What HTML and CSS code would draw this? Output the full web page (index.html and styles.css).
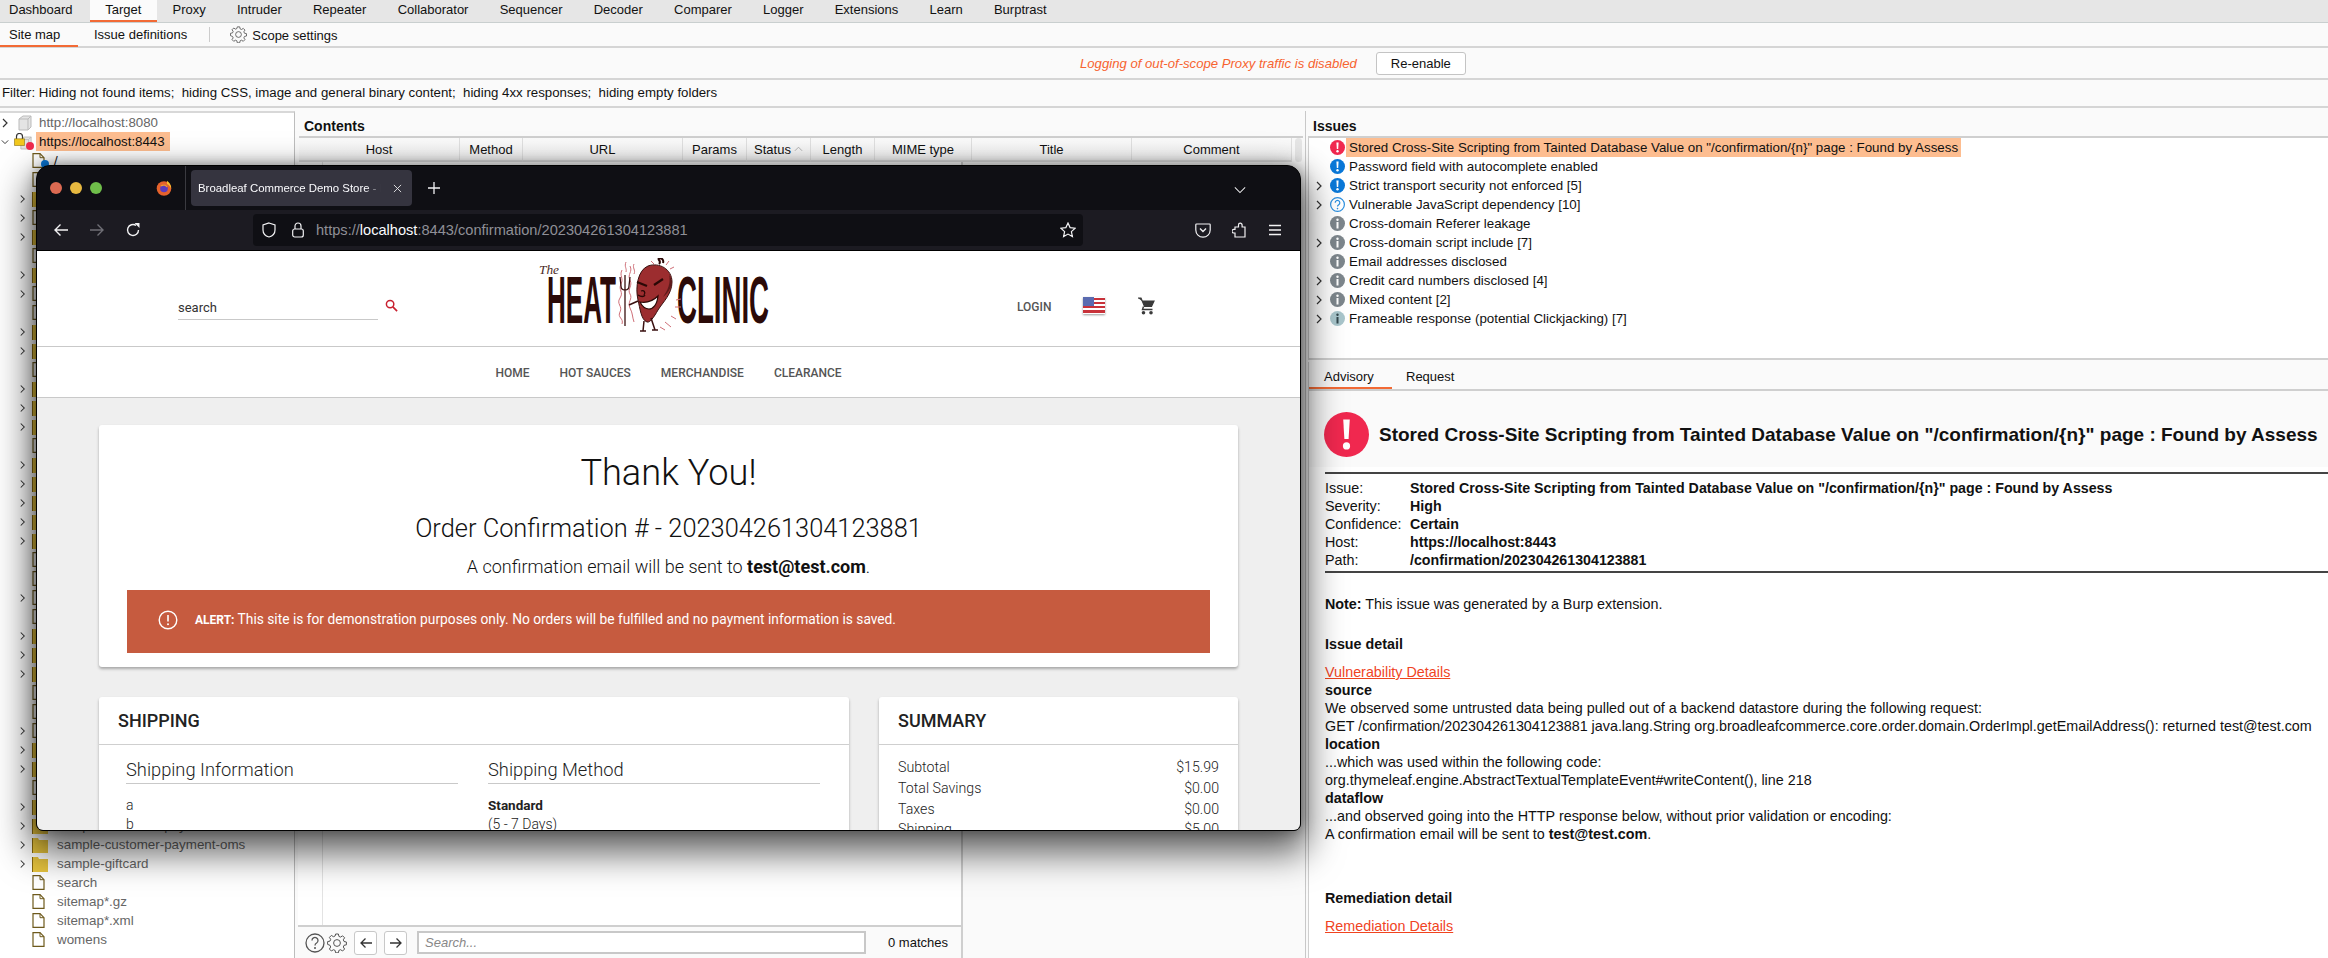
FILE: index.html
```html
<!DOCTYPE html>
<html lang="en">
<head>
<meta charset="utf-8">
<title>Burp Suite - Target</title>
<link rel="stylesheet" href="styles.css">
</head>
<body>
<svg class="defs" width="0" height="0" aria-hidden="true">
  <symbol id="chev" viewBox="0 0 8 10"><path d="M2 1l4 4-4 4" fill="none" stroke="#333" stroke-width="1.2"/></symbol>
  <symbol id="chevd" viewBox="0 0 10 8"><path d="M1 2l4 4 4-4" fill="none" stroke="#333" stroke-width="1.2"/></symbol>
  <symbol id="file" viewBox="0 0 13 15"><path d="M1 .7h7l4 4v9.6H1z" fill="#fff" stroke="#6e5a1c" stroke-width="1.2"/><path d="M8 .7v4h4" fill="none" stroke="#6e5a1c"/></symbol>
  <symbol id="folder" viewBox="0 0 16 16"><path d="M0 1h6l1 2h9v13H0z" fill="#e8c53e"/><path d="M0 1h1v15H0z" fill="#8a6b10"/></symbol>
  <symbol id="cube" viewBox="0 0 14 16"><path d="M1 4l4-3h8v11l-3 3H1z" fill="#e4e4e4" stroke="#bbb"/><path d="M1 4h9v11M10 4l3-3" fill="none" stroke="#bbb"/></symbol>
  <symbol id="gear" viewBox="0 0 20 20"><path d="M8.6 1h2.8l.5 2.4 1.7.7 2-1.3 2 2-1.3 2 .7 1.7 2.4.5v2.8l-2.4.5-.7 1.7 1.3 2-2 2-2-1.3-1.7.7-.5 2.4H8.6l-.5-2.4-1.7-.7-2 1.3-2-2 1.3-2-.7-1.7L.6 11.4V8.6L3 8.1l.7-1.7-1.3-2 2-2 2 1.3 1.7-.7z" fill="none" stroke="#555" stroke-width="1"/><circle cx="10" cy="10" r="3.4" fill="none" stroke="#555"/></symbol>
  <symbol id="isev" viewBox="0 0 15 15"><circle cx="7.5" cy="7.5" r="7.5" fill="#f0284f"/><path d="M6.4 2.5h2.2l-.4 6.5H6.800z" fill="#fff"/><circle cx="7.500" cy="11.300" r="1.200" fill="#fff"/></symbol>
  <symbol id="iblue" viewBox="0 0 15 15"><circle cx="7.5" cy="7.5" r="7.5" fill="#0a78d8"/><path d="M6.4 2.500h2.200l-.4 6.500H6.800z" fill="#fff"/><circle cx="7.500" cy="11.300" r="1.200" fill="#fff"/></symbol>
  <symbol id="iq" viewBox="0 0 15 15"><circle cx="7.500" cy="7.500" r="6.900" fill="#fff" stroke="#2a8fe0" stroke-width="1.200"/><path d="M5.200 5.700a2.300 2.300 0 1 1 3.500 2c-.8.500-1.200 1-1.200 1.900" fill="none" stroke="#2a8fe0" stroke-width="1.200"/><circle cx="7.500" cy="11.600" r=".8" fill="#2a8fe0"/></symbol>
  <symbol id="igray" viewBox="0 0 15 15"><circle cx="7.500" cy="7.500" r="7.500" fill="#7d868c"/><circle cx="7.500" cy="3.800" r="1.200" fill="#fff"/><path d="M6.500 6h2v6.500h-2z" fill="#fff"/></symbol>
  <symbol id="ipale" viewBox="0 0 15 15"><circle cx="7.500" cy="7.500" r="7.500" fill="#a9c6cc"/><circle cx="7.500" cy="3.800" r="1.200" fill="#33474d"/><path d="M6.500 6h2v6.500h-2z" fill="#33474d"/></symbol>
</svg>

<div class="burp">
  <nav class="tabs">
    <span class="tab">Dashboard</span><span class="tab on">Target</span><span class="tab">Proxy</span><span class="tab">Intruder</span><span class="tab">Repeater</span><span class="tab">Collaborator</span><span class="tab">Sequencer</span><span class="tab">Decoder</span><span class="tab">Comparer</span><span class="tab">Logger</span><span class="tab">Extensions</span><span class="tab">Learn</span><span class="tab">Burptrast</span>
  </nav>
  <nav class="subtabs">
    <span class="sub on">Site map</span><span class="sub">Issue definitions</span>
    <span class="vsep"></span>
    <svg class="scope-gear"><use href="#gear"/></svg><span class="scope">Scope settings</span>
  </nav>
  <div class="notice">
    <em class="warn">Logging of out-of-scope Proxy traffic is disabled</em>
    <button class="btn">Re-enable</button>
  </div>
  <div class="filter">Filter: Hiding not found items;&nbsp; hiding CSS, image and general binary content;&nbsp; hiding 4xx responses;&nbsp; hiding empty folders</div>

  <main class="main">
    <section class="tree">
      <div class="row l0 muted"><svg class="cv"><use href="#chev"/></svg><svg class="ic"><use href="#cube"/></svg><span>http://localhost:8080</span></div>
      <div class="row l0"><svg class="cv"><use href="#chevd"/></svg><span class="ic lockic"><svg class="ic"><use href="#cube"/></svg><svg class="padlock" viewBox="0 0 11 13"><path d="M2.500 6V3.500a3 3 0 0 1 6 0V6" fill="none" stroke="#333" stroke-width="1.200"/><path d="M.5 5.800h10v6.700H.5z" fill="#f2c81e" stroke="#8a7010" stroke-width=".6"/></svg><i class="dot red"></i></span><span class="hl">https://localhost:8443</span></div>
      <div class="row l1"><i class="cvgap"></i><span class="fic"><svg class="fi"><use href="#file"/></svg><i class="dot blue"></i></span><span>/</span></div>
      <div class="row l1"><i class="cvgap"></i><svg class="fi"><use href="#file"/></svg></div>
      <div class="row l1"><svg class="cv"><use href="#chev"/></svg><svg class="fo"><use href="#folder"/></svg></div>
      <div class="row l1"><svg class="cv"><use href="#chev"/></svg><svg class="fi"><use href="#file"/></svg></div>
      <div class="row l1"><svg class="cv"><use href="#chev"/></svg><svg class="fo"><use href="#folder"/></svg></div>
      <div class="row l1"><i class="cvgap"></i><svg class="fi"><use href="#file"/></svg></div>
      <div class="row l1"><svg class="cv"><use href="#chev"/></svg><svg class="fo"><use href="#folder"/></svg></div>
      <div class="row l1"><svg class="cv"><use href="#chev"/></svg><svg class="fi"><use href="#file"/></svg></div>
      <div class="row l1"><i class="cvgap"></i><svg class="fi"><use href="#file"/></svg></div>
      <div class="row l1"><svg class="cv"><use href="#chev"/></svg><svg class="fo"><use href="#folder"/></svg></div>
      <div class="row l1"><svg class="cv"><use href="#chev"/></svg><svg class="fo"><use href="#folder"/></svg></div>
      <div class="row l1"><i class="cvgap"></i><svg class="fi"><use href="#file"/></svg></div>
      <div class="row l1"><svg class="cv"><use href="#chev"/></svg><svg class="fo"><use href="#folder"/></svg></div>
      <div class="row l1"><svg class="cv"><use href="#chev"/></svg><svg class="fo"><use href="#folder"/></svg></div>
      <div class="row l1"><svg class="cv"><use href="#chev"/></svg><svg class="fo"><use href="#folder"/></svg></div>
      <div class="row l1"><i class="cvgap"></i><svg class="fi"><use href="#file"/></svg></div>
      <div class="row l1"><svg class="cv"><use href="#chev"/></svg><svg class="fo"><use href="#folder"/></svg></div>
      <div class="row l1"><svg class="cv"><use href="#chev"/></svg><svg class="fo"><use href="#folder"/></svg></div>
      <div class="row l1"><svg class="cv"><use href="#chev"/></svg><svg class="fo"><use href="#folder"/></svg></div>
      <div class="row l1"><svg class="cv"><use href="#chev"/></svg><svg class="fo"><use href="#folder"/></svg></div>
      <div class="row l1"><svg class="cv"><use href="#chev"/></svg><svg class="fo"><use href="#folder"/></svg></div>
      <div class="row l1"><i class="cvgap"></i><svg class="fi"><use href="#file"/></svg></div>
      <div class="row l1"><i class="cvgap"></i><svg class="fi"><use href="#file"/></svg></div>
      <div class="row l1"><svg class="cv"><use href="#chev"/></svg><svg class="fi"><use href="#file"/></svg></div>
      <div class="row l1"><i class="cvgap"></i><svg class="fi"><use href="#file"/></svg></div>
      <div class="row l1"><svg class="cv"><use href="#chev"/></svg><svg class="fo"><use href="#folder"/></svg></div>
      <div class="row l1"><svg class="cv"><use href="#chev"/></svg><svg class="fo"><use href="#folder"/></svg></div>
      <div class="row l1"><svg class="cv"><use href="#chev"/></svg><svg class="fo"><use href="#folder"/></svg></div>
      <div class="row l1"><i class="cvgap"></i><svg class="fi"><use href="#file"/></svg></div>
      <div class="row l1"><i class="cvgap"></i><svg class="fi"><use href="#file"/></svg></div>
      <div class="row l1"><svg class="cv"><use href="#chev"/></svg><svg class="fi"><use href="#file"/></svg></div>
      <div class="row l1"><svg class="cv"><use href="#chev"/></svg><svg class="fo"><use href="#folder"/></svg></div>
      <div class="row l1"><svg class="cv"><use href="#chev"/></svg><svg class="fo"><use href="#folder"/></svg></div>
      <div class="row l1"><i class="cvgap"></i><svg class="fi"><use href="#file"/></svg></div>
      <div class="row l1"><svg class="cv"><use href="#chev"/></svg><svg class="fo"><use href="#folder"/></svg></div>
      <div class="row l1 muted"><svg class="cv"><use href="#chev"/></svg><svg class="fo"><use href="#folder"/></svg><span>sample-customer-payment</span></div>
      <div class="row l1 muted"><svg class="cv"><use href="#chev"/></svg><svg class="fo"><use href="#folder"/></svg><span>sample-customer-payment-oms</span></div>
      <div class="row l1 muted"><svg class="cv"><use href="#chev"/></svg><svg class="fo"><use href="#folder"/></svg><span>sample-giftcard</span></div>
      <div class="row l1 muted"><i class="cvgap"></i><svg class="fi"><use href="#file"/></svg><span>search</span></div>
      <div class="row l1 muted"><i class="cvgap"></i><svg class="fi"><use href="#file"/></svg><span>sitemap*.gz</span></div>
      <div class="row l1 muted"><i class="cvgap"></i><svg class="fi"><use href="#file"/></svg><span>sitemap*.xml</span></div>
      <div class="row l1 muted"><i class="cvgap"></i><svg class="fi"><use href="#file"/></svg><span>womens</span></div>
    </section>

    <section class="contents">
      <h2 class="ptitle">Contents</h2>
      <div class="thead">
        <div class="cols">
          <span>Host</span><span>Method</span><span>URL</span><span>Params</span>
          <span>Status<svg class="sort" viewBox="0 0 10 6"><path d="M1 5l4-4 4 4" fill="none" stroke="#aaa"/></svg></span>
          <span>Length</span><span>MIME type</span><span>Title</span><span>Comment</span>
        </div>
        <i class="vbar"></i>
      </div>
      <div class="lower">
        <div class="reqpane">
          <div class="gutter"></div>
          <div class="searchbar">
            <svg class="help" viewBox="0 0 20 20"><circle cx="10" cy="10" r="9" fill="none" stroke="#555" stroke-width="1.300"/><path d="M7 7.500a3 3 0 1 1 4.600 2.500c-1 .6-1.600 1.200-1.600 2.500" fill="none" stroke="#555" stroke-width="1.300"/><circle cx="10" cy="15" r="1" fill="#555"/></svg>
            <svg class="sgear"><use href="#gear"/></svg>
            <span class="nbtn"><svg viewBox="0 0 14 14"><path d="M13 7H2M6.500 2.500L2 7l4.500 4.500" fill="none" stroke="#333" stroke-width="1.300"/></svg></span>
            <span class="nbtn"><svg viewBox="0 0 14 14"><path d="M1 7h11M7.500 2.500L12 7l-4.500 4.500" fill="none" stroke="#333" stroke-width="1.300"/></svg></span>
            <span class="sinput">Search...</span>
            <span class="matches">0 matches</span>
          </div>
        </div>
      </div>
    </section>

    <section class="issues">
      <h2 class="ptitle">Issues</h2>
      <div class="ilist">
        <div class="irow"><i class="cvgap"></i><svg class="ii"><use href="#isev"/></svg><span class="hl">Stored Cross-Site Scripting from Tainted Database Value on "/confirmation/{n}" page : Found by Assess</span></div>
        <div class="irow"><i class="cvgap"></i><svg class="ii"><use href="#iblue"/></svg><span>Password field with autocomplete enabled</span></div>
        <div class="irow"><svg class="cv"><use href="#chev"/></svg><svg class="ii"><use href="#iblue"/></svg><span>Strict transport security not enforced [5]</span></div>
        <div class="irow"><svg class="cv"><use href="#chev"/></svg><svg class="ii"><use href="#iq"/></svg><span>Vulnerable JavaScript dependency [10]</span></div>
        <div class="irow"><i class="cvgap"></i><svg class="ii"><use href="#igray"/></svg><span>Cross-domain Referer leakage</span></div>
        <div class="irow"><svg class="cv"><use href="#chev"/></svg><svg class="ii"><use href="#igray"/></svg><span>Cross-domain script include [7]</span></div>
        <div class="irow"><i class="cvgap"></i><svg class="ii"><use href="#igray"/></svg><span>Email addresses disclosed</span></div>
        <div class="irow"><svg class="cv"><use href="#chev"/></svg><svg class="ii"><use href="#igray"/></svg><span>Credit card numbers disclosed [4]</span></div>
        <div class="irow"><svg class="cv"><use href="#chev"/></svg><svg class="ii"><use href="#igray"/></svg><span>Mixed content [2]</span></div>
        <div class="irow"><svg class="cv"><use href="#chev"/></svg><svg class="ii"><use href="#ipale"/></svg><span>Frameable response (potential Clickjacking) [7]</span></div>
      </div>
      <div class="atabs"><span class="atab on">Advisory</span><span class="atab">Request</span></div>
      <article class="advisory">
        <header class="ahead">
          <svg class="bigsev"><use href="#isev"/></svg>
          <h1>Stored Cross-Site Scripting from Tainted Database Value on "/confirmation/{n}" page : Found by Assess</h1>
        </header>
        <dl class="meta">
          <dt>Issue:</dt><dd>Stored Cross-Site Scripting from Tainted Database Value on "/confirmation/{n}" page : Found by Assess</dd>
          <dt>Severity:</dt><dd>High</dd>
          <dt>Confidence:</dt><dd>Certain</dd>
          <dt>Host:</dt><dd>https://localhost:8443</dd>
          <dt>Path:</dt><dd>/confirmation/202304261304123881</dd>
        </dl>
        <p class="note"><b>Note:</b> This issue was generated by a Burp extension.</p>
        <h3 class="ah3">Issue detail</h3>
        <div class="detail">
          <a class="lnk">Vulnerability Details</a>
          <b>source</b>
          <span>We observed some untrusted data being pulled out of a backend datastore during the following request:</span>
          <span>GET /confirmation/202304261304123881 java.lang.String org.broadleafcommerce.core.order.domain.OrderImpl.getEmailAddress(): returned test@test.com</span>
          <b>location</b>
          <span>...which was used within the following code:</span>
          <span>org.thymeleaf.engine.AbstractTextualTemplateEvent#writeContent(), line 218</span>
          <b>dataflow</b>
          <span>...and observed going into the HTTP response below, without prior validation or encoding:</span>
          <span>A confirmation email will be sent to <b>test@test.com</b>.</span>
        </div>
        <h3 class="ah3 rem">Remediation detail</h3>
        <div class="detail"><a class="lnk">Remediation Details</a></div>
      </article>
    </section>
  </main>
</div>

<div class="ff">
  <div class="ff-title">
    <i class="light r"></i><i class="light y"></i><i class="light g"></i>
    <svg class="fxlogo" viewBox="0 0 16 16"><circle cx="8" cy="8.500" r="7.300" fill="#e5622c"/><path d="M11 .8c3 2 4.500 5 4 8-.6-2.200-1.800-3.800-4-4.800z" fill="#f9c22d"/><circle cx="8" cy="8.500" r="3.800" fill="#5b3bbd"/><path d="M5 6c2-1.500 5-1 6 1" fill="none" stroke="#f59a2b" stroke-width="1.200"/></svg>
    <i class="ff-sep"></i>
    <div class="ff-tab"><span class="ff-tabtext">Broadleaf Commerce Demo Store - Heat Clinic</span><svg class="ff-x" viewBox="0 0 10 10"><path d="M1 1l8 8M9 1L1 9" stroke="#e8e8ea" stroke-width="1"/></svg></div>
    <svg class="ff-plus" viewBox="0 0 12 12"><path d="M6 0v12M0 6h12" stroke="#f2f2f4" stroke-width="1.300"/></svg>
    <svg class="ff-chev" viewBox="0 0 14 8"><path d="M1 1l6 6 6-6" fill="none" stroke="#e8e8ea" stroke-width="1.200"/></svg>
  </div>
  <div class="ff-nav">
    <svg class="nv" viewBox="0 0 16 16"><path d="M15 8H2M7.500 2.500L2 8l5.500 5.500" fill="none" stroke="#f2f2f4" stroke-width="1.400"/></svg>
    <svg class="nv" viewBox="0 0 16 16"><path d="M1 8h13M8.500 2.500L14 8l-5.500 5.500" fill="none" stroke="#6f6f76" stroke-width="1.400"/></svg>
    <svg class="nv" viewBox="0 0 16 16"><path d="M13.500 8A5.500 5.500 0 1 1 11 3.400" fill="none" stroke="#f2f2f4" stroke-width="1.400"/><path d="M9.500 1H14.500V6z" fill="#f2f2f4"/></svg>
    <div class="urlbar">
      <svg class="ub-shield" viewBox="0 0 14 16"><path d="M7 1l6 2v5c0 3.500-2.500 6-6 7-3.500-1-6-3.500-6-7V3z" fill="none" stroke="#f2f2f4" stroke-width="1.200"/></svg>
      <svg class="ub-lock" viewBox="0 0 12 16"><path d="M3 7V4a3 3 0 0 1 6 0v3" fill="none" stroke="#f2f2f4" stroke-width="1.200"/><rect x=".7" y="7" width="10.600" height="8" rx="2" fill="none" stroke="#f2f2f4" stroke-width="1.200"/></svg>
      <span class="url">https://<b>localhost</b>:8443/confirmation/202304261304123881</span>
      <svg class="ub-star" viewBox="0 0 16 16"><path d="M8 1l2.100 4.600 5 .6-3.700 3.400 1 5L8 12.100 3.600 14.600l1-5L.9 6.200l5-.6z" fill="none" stroke="#f2f2f4" stroke-width="1.200"/></svg>
    </div>
    <svg class="tb pocket" viewBox="0 0 16 16"><path d="M1.600 2h12.800c.4 0 .8.400.8.800V8a7.200 7.200 0 0 1-14.400 0V2.800c0-.4.400-.8.800-.8z" fill="none" stroke="#f2f2f4" stroke-width="1.200"/><path d="M5 6.500L8 9.500l3-3" fill="none" stroke="#f2f2f4" stroke-width="1.400"/></svg>
    <svg class="tb ext" viewBox="0 0 16 16"><path d="M3 15V11H1.800a1.800 1.800 0 0 1 0-3.600H3V5h3.500V3a1.800 1.800 0 0 1 3.600 0v2H13v10z" fill="none" stroke="#f2f2f4" stroke-width="1.200"/></svg>
    <svg class="tb menu" viewBox="0 0 14 12"><path d="M1 1.500h12M1 6h12M1 10.500h12" stroke="#f2f2f4" stroke-width="1.300"/></svg>
  </div>
  <div class="ff-page">
    <header class="store-head">
      <div class="store-search">
        <span class="store-q">search</span>
        <svg class="store-mag" viewBox="0 0 14 14"><circle cx="5.500" cy="5.500" r="4" fill="none" stroke="#c8202f" stroke-width="1.600"/><path d="M8.500 8.500L13 13" stroke="#c8202f" stroke-width="1.800"/></svg>
      </div>
      <svg class="logo" viewBox="0 0 234 78">
        <text class="lg-the" x="1" y="16" textLength="20" lengthAdjust="spacingAndGlyphs">The</text>
        <text class="lg" x="9" y="65" textLength="69" lengthAdjust="spacingAndGlyphs">HEAT</text>
        <text class="lg" x="139" y="65" textLength="92" lengthAdjust="spacingAndGlyphs">CLINIC</text>
        <g fill="none" stroke="#cf6f78" stroke-width="1">
          <path d="M84 12c-3 6 2 8-1 14s3 8-1 14 3 8 0 14 4 6 2 12"/>
          <path d="M92 8c3 6-3 8 0 14s-3 9 0 14-3 8 0 14 2 8 4 14"/>
          <path d="M96 6c-2 4 2 6 0 10M88 4c-2 5 1 6 0 10"/>
          <path d="M113 3l3 3M122 1l0 3M131 3l-3 4M136 9l-4 2M138 42l5-1M137 49l6 0M133 58l5 3M127 64l6 5M122 69l5 3"/>
        </g>
        <path d="M87 18v50M82 19l1 9c0 3 2 4 4 4s4-1 4-4l1-9M87 17v10" fill="none" stroke="#3a1110" stroke-width="1.300"/>
        <path d="M91 47l9-4" stroke="#3a1110" stroke-width="1.600"/>
        <path d="M110 8c11-4 24 3 24 16 0 12-9 20-14 28-4 7-8 13-11 12-6-2-7-14-9-22-3-13 0-30 10-34z" fill="#9c2d2f" stroke="#3a1110"/>
        <path d="M131 16c2 9-1 16-6 23 4-3 9-9 9-16z" fill="#5e1a1a"/>
        <path d="M121 6c3-3-2-4 0-6 3 0 5 2 4 5" fill="none" stroke="#2a0806" stroke-width="2"/>
        <path d="M99 24l10 4M125 21l-9 6" stroke="#2a0806" stroke-width="2.200"/>
        <path d="M103 33c3-1 5 1 3 4 M100 37c3 2 6 2 7 0" fill="none" stroke="#2a0806" stroke-width="1.300"/>
        <path d="M102 44c6 1 12 0 18-6-1 9-5 13-9 13s-7-3-9-7z" fill="#fff" stroke="#2a0806" stroke-width="1.200"/>
        <path d="M106 63l-1 10M113 60l4 12M102 73h6M114 72h6" fill="none" stroke="#3a1110" stroke-width="1.500"/>
      </svg>
      <div class="store-right">
        <span class="store-login">LOGIN</span>
        <svg class="flag" viewBox="0 0 22 17"><rect width="22" height="17" fill="#fff"/><path d="M0 1h22v2H0zM0 5h22v2H0zM0 9h22v2H0zM0 13h22v3H0z" fill="#c8323a"/><rect width="11" height="9" fill="#5a6bb0"/></svg>
        <svg class="cart" viewBox="0 0 18 18"><path d="M1 1h3l3.500 8.500h7L17 4H5" fill="#3a3a3a" stroke="#3a3a3a" stroke-width="1.200"/><path d="M6.500 9.500l-1 3h10" fill="none" stroke="#3a3a3a" stroke-width="1.400"/><circle cx="6.500" cy="15.800" r="1.800" fill="#3a3a3a"/><circle cx="14" cy="15.800" r="1.800" fill="#3a3a3a"/></svg>
      </div>
    </header>
    <nav class="store-nav"><span>HOME</span><span>HOT SAUCES</span><span>MERCHANDISE</span><span>CLEARANCE</span></nav>
    <div class="store-body">
      <section class="card thanks">
        <h1>Thank You!</h1>
        <h2>Order Confirmation # - 202304261304123881</h2>
        <p>A confirmation email will be sent to <b>test@test.com</b>.</p>
        <div class="alert">
          <svg class="alert-i" viewBox="0 0 20 20"><circle cx="10" cy="10" r="8.800" fill="none" stroke="#fff" stroke-width="1.400"/><path d="M10 5v6.500" stroke="#fff" stroke-width="1.600"/><circle cx="10" cy="14.300" r="1" fill="#fff"/></svg>
          <span><b>ALERT:</b> This site is for demonstration purposes only. No orders will be fulfilled and no payment information is saved.</span>
        </div>
      </section>
      <div class="store-cols">
        <section class="card shipping">
          <h3 class="card-h">SHIPPING</h3>
          <div class="ship-body">
            <div class="ship-col"><h4>Shipping Information</h4><p>a</p><p>b</p></div>
            <div class="ship-col"><h4>Shipping Method</h4><p><b>Standard</b></p><p>(5 - 7 Days)</p></div>
          </div>
        </section>
        <section class="card summary">
          <h3 class="card-h">SUMMARY</h3>
          <div class="sum-body">
            <div class="sum-row"><span>Subtotal</span><span>$15.99</span></div>
            <div class="sum-row"><span>Total Savings</span><span>$0.00</span></div>
            <div class="sum-row"><span>Taxes</span><span>$0.00</span></div>
            <div class="sum-row"><span>Shipping</span><span>$5.00</span></div>
          </div>
        </section>
      </div>
    </div>
  </div>
</div>
</body>
</html>
```

FILE: styles.css
```css
* { box-sizing: border-box; }
html, body { margin: 0; height: 100%; overflow: hidden; }
body { font: 13px/19px "Liberation Sans", Arial, sans-serif; color: #111; background: #fff; }
.defs { position: absolute; }
h1, h2, h3, h4, p, dl, dd { margin: 0; }
i { font-style: normal; display: block; }

.burp { height: 958px; width: 2328px; display: flex; flex-direction: column; }

.tabs { height: 23px; background: #e6e6e6; border-bottom: 1px solid #c9cfcf; display: flex; }
.tab { padding: 0 15.600px; line-height: 19px; height: 22px; }
.tab:first-child { padding-left: 9px; padding-right: 17px; }
.tab.on { background: #fbfbfb; border-bottom: 2px solid #f26a35; }

.subtabs { height: 25px; background: #fafafa; border-bottom: 2px solid #d5d5d5; display: flex; align-items: flex-start; }
.sub { height: 24px; padding: 0 16px; line-height: 23px; }
.sub.on { padding-left: 9px; padding-right: 17px; border-bottom: 2px solid #f26a35; width: 78px; }
.vsep { width: 1px; height: 15px; background: #ccc; margin: 4px 20px 0 6px; }
.scope-gear { width: 17px; height: 17px; margin-top: 3px; }
.scope { margin-left: 5px; line-height: 25px; }

.notice { height: 32px; background: #fafafa; border-bottom: 2px solid #d5d5d5; display: flex; align-items: center; }
.warn { margin-left: 1080px; color: #f7632f; font-size: 13.150px; }
.btn { margin-left: 19px; width: 90px; height: 23px; background: #fff; border: 1px solid #c4c4c4; border-radius: 3px; font: inherit; color: #111; padding: 0; }

.filter { height: 28px; background: #fafafa; border-bottom: 2px solid #d5d5d5; padding-left: 2px; line-height: 25px; font-size: 13.250px; white-space: nowrap; }

.main { flex: 1; display: flex; min-height: 0; background: #fafafa; }

.tree { width: 295px; margin-top: 3px; background: #fff; border-top: 2px solid #d8d8d8; border-right: 1px solid #bdbdbd; font-size: 13.400px; }
.row { height: 19px; display: flex; align-items: center; white-space: nowrap; position: relative; }
.row.muted { color: #666; }
.l0 { padding-left: 1px; font-size: 13.300px; }
.l1 { padding-left: 19px; }
.cv { width: 7px; height: 10px; flex: none; margin-right: 6px; }
.cvgap { width: 13px; flex: none; }
.l0 .cv { margin-right: 9px; width: 8px; }
.ic { width: 14px; height: 16px; flex: none; margin-right: 7px; position: relative; }
.lockic { display: block; margin-right: 7px; }
.lockic .ic { position: absolute; left: 2px; top: 1px; margin: 0; width: 12px; }
.padlock { position: absolute; left: -4px; top: -1px; width: 11px; height: 13px; }
.dot { position: absolute; width: 8px; height: 8px; border-radius: 50%; }
.dot.red { background: #ef2a4d; left: 8px; top: 8px; }
.dot.blue { background: #0a78d8; left: 9px; top: 7px; }
.fi { width: 13px; height: 15px; flex: none; margin-right: 12px; }
.fic { position: relative; display: block; width: 13px; height: 15px; flex: none; margin-right: 9px; }
.fic .fi { margin: 0; display: block; }
.fo { width: 16px; height: 16px; flex: none; margin-right: 9px; }
.hl { background: #fdbd90; height: 19px; line-height: 19px; padding: 0 4px 0 3px; }
.row .hl { margin-left: -3px; padding-right: 5px; }

.contents { width: 1007px; margin-left: 3px; display: flex; flex-direction: column; }
.ptitle { font-size: 14px; line-height: 18px; font-weight: 700; height: 28px; padding: 9px 0 0 6px; border-bottom: 0; }
.thead { height: 26px; display: flex; border-top: 2px solid #cfcfcf; margin-left: 1px; width: 1004px; }
.cols { display: grid; grid-template-columns: 161px 63px 160px 64px 64px 64px 97px 160px 160px; height: 24px; border-bottom: 2px solid #dcdcdc; background: linear-gradient(#fbfbfb, #f2f2f2); width: 993px; }
.cols span { text-align: center; line-height: 24px; border-right: 1px solid #e0e0e0; white-space: nowrap; position: relative; }
.sort { width: 9px; height: 6px; margin-left: 3px; vertical-align: 2px; }
.vbar { width: 7px; height: 24px; background: #e6e6e6; border-radius: 4px; margin-left: 3px; }
.lower { flex: 1; display: flex; min-height: 0; }
.reqpane { width: 665px; border-right: 2px solid #cfcfcf; display: flex; flex-direction: column; background: #fff; }
.gutter { flex: 1; margin-left: 24px; border-left: 1px solid #e3e3e3; }
.searchbar { height: 33px; border-top: 2px solid #cfcfcf; background: #fafafa; display: flex; align-items: center; padding-left: 7px; }
.help { width: 20px; height: 20px; flex: none; }
.sgear { width: 20px; height: 20px; flex: none; margin-left: 2px; }
.nbtn { width: 23px; height: 24px; border: 1px solid #c8c8c8; border-radius: 3px; background: #fff; margin-left: 7px; display: flex; align-items: center; justify-content: center; flex: none; }
.nbtn svg { width: 14px; height: 14px; }
.sinput { width: 449px; height: 23px; margin-left: 10px; border: 2px solid #c8c8c8; background: #fff; color: #888; font-style: italic; line-height: 20px; padding-left: 6px; flex: none; font-size: 13px; }
.matches { margin-left: 22px; white-space: nowrap; }

.issues { flex: 1; min-width: 0; border-left: 1px solid #c8c8c8; margin-top: 3px; display: flex; flex-direction: column; }
.issues .ptitle { padding: 6px 0 0 7px; height: 25px; }
.ilist { height: 224px; margin-left: 2px; border-top: 2px solid #cfcfcf; border-left: 1px solid #cfcfcf; border-bottom: 2px solid #d0d0d0; background: #fff; font-size: 13.330px; }
.irow { height: 19px; display: flex; align-items: center; white-space: nowrap; padding-left: 6px; }
.irow .cv { width: 8px; margin-right: 7px; }
.irow .cvgap { width: 15px; }
.ii { width: 15px; height: 15px; flex: none; margin-right: 4px; }
.irow .hl { margin-left: -3px; padding-right: 3px; }
.atabs { height: 29px; margin: 2px 0 0 2px; display: flex; border-bottom: 2px solid #cfcfcf; border-left: 1px solid #cfcfcf; background: #fafafa; }
.atab { padding: 0 15px; height: 27px; line-height: 30px; }
.atab.on { width: 83px; border-bottom: 2px solid #f26a35; padding-right: 0; }
.atab + .atab { padding-left: 14px; }
.advisory { flex: 1; min-height: 0; margin-left: 2px; border-left: 1px solid #cfcfcf; background: #fff; font-size: 14.330px; }
.ahead { display: flex; align-items: center; height: 76px; padding: 12px 0 1px 15px; background: #fafafa; }
.bigsev { width: 45px; height: 45px; flex: none; margin-right: 10px; }
.ahead h1 { font-size: 19px; line-height: 24px; white-space: nowrap; font-weight: 700; }
.meta { margin: 5px 0 0 16px; border-top: 2px solid #444; border-bottom: 2px solid #444; display: grid; grid-template-columns: 85px 1fr; padding: 5px 0 2px; line-height: 18px; }
.meta dd { font-weight: 700; white-space: nowrap; font-size: 14.220px; }
.note { margin: 22px 0 0 16px; line-height: 18px; }
.ah3 { margin: 22px 0 0 16px; font-size: 14.300px; line-height: 18px; }
.detail { margin: 10px 0 0 16px; display: flex; flex-direction: column; align-items: flex-start; line-height: 18px; white-space: nowrap; }
.lnk { color: #f0441f; text-decoration: underline; }
.rem { margin-top: 46px; }

/* Firefox window floating above the Burp UI */
.ff { position: absolute; left: 36px; top: 165px; width: 1265px; height: 666px; border-radius: 14px 14px 7px 7px; border: 1px solid #000; overflow: hidden; background: #0f0f14; box-shadow: 0 16px 36px 6px rgba(0,0,0,.62), 0 0 14px rgba(0,0,0,.35); display: flex; flex-direction: column; }
.ff-title { height: 44px; flex: none; background: #0f0f14; display: flex; align-items: center; position: relative; }
.light { width: 12px; height: 12px; border-radius: 50%; flex: none; margin-right: 8px; }
.light.r { background: #dc6a52; margin-left: 13px; }
.light.y { background: #e6b840; }
.light.g { background: #6fbe4a; }
.fxlogo { width: 16px; height: 16px; margin-left: 46px; flex: none; }
.ff-sep { width: 1px; height: 44px; background: #3a3a40; margin-left: 13px; flex: none; }
.ff-tab { width: 221px; height: 36px; background: #35343f; border-radius: 4px; margin-left: 5px; display: flex; align-items: center; padding: 0 7px; flex: none; color: #fbfbfe; }
.ff-tabtext { width: 183px; overflow: hidden; white-space: nowrap; font-size: 11.400px; -webkit-mask-image: linear-gradient(90deg, #000 92%, transparent); mask-image: linear-gradient(90deg, #000 92%, transparent); }
.ff-x { width: 9px; height: 9px; margin-left: 12px; flex: none; }
.ff-plus { width: 12px; height: 12px; margin-left: 16px; }
.ff-chev { width: 12px; height: 8px; position: absolute; right: 54px; top: 20px; }
.ff-nav { height: 41px; flex: none; background: #1c1b22; border-bottom: 1px solid #000; display: flex; align-items: center; padding-left: 16px; }
.nv { width: 16px; height: 16px; margin-right: 20px; flex: none; }
.urlbar { width: 830px; height: 32px; background: #0f0f14; border-radius: 4px; display: flex; align-items: center; padding-left: 9px; flex: none; position: relative; margin-left: 92px; }
.ub-shield { width: 14px; height: 16px; flex: none; }
.ub-lock { width: 12px; height: 16px; margin-left: 16px; flex: none; }
.url { margin-left: 12px; font-size: 14.600px; color: #8f8f97; white-space: nowrap; font-family: "Liberation Sans", sans-serif; }
.url b { color: #fbfbfe; font-weight: 400; }
.ub-star { position: absolute; right: 7px; top: 8px; width: 16px; height: 16px; }
.tb { width: 16px; height: 16px; flex: none; }
.pocket { margin-left: 112px; }
.ext { margin-left: 21px; }
.menu { margin-left: 20px; width: 14px; height: 12px; }

.ff-page { flex: 1; min-height: 0; background: #efefef; font-family: Roboto, "Liberation Sans", sans-serif; color: #222; overflow: hidden; }
.store-head { height: 96px; background: #fff; display: flex; align-items: center; padding-left: 141px; border-bottom: 1px solid #c9c9c9; }
.store-search { width: 220px; display: flex; align-items: flex-start; margin-top: 21px; }
.store-q { width: 200px; border-bottom: 1px solid #c9c9c9; height: 21px; font-size: 13px; line-height: 18px; color: #333; }
.store-mag { width: 13px; height: 13px; margin: 0 0 0 7px; }
.logo { width: 234px; height: 78px; margin-left: 140px; margin-top: -4px; flex: none; }
.lg { font: 700 67px "Liberation Sans", sans-serif; fill: #2b0a08; }
.lg-the { font: italic 13px "Liberation Serif", serif; fill: #4a2a26; }
.store-right { display: flex; align-items: center; margin-left: 245px; margin-top: 18px; }
.store-login { font-size: 12px; font-weight: 500; color: #555; width: 35px; }
.flag { width: 22px; height: 17px; margin: -4px 0 0 31px; box-shadow: 0 1px 2px rgba(0,0,0,.4); }
.cart { width: 18px; height: 18px; margin: -4px 0 0 32px; }
.store-nav { height: 51px; padding-top: 2px; background: #fff; border-bottom: 1px solid #c9c9c9; display: flex; justify-content: center; align-items: center; gap: 30px; font-size: 12px; font-weight: 500; color: #555; }
.store-body { padding: 27px 62px 0 62px; }
.card { background: #fff; border-radius: 3px; box-shadow: 0 2px 3px rgba(0,0,0,.3); }
.thanks { height: 242px; padding: 0 28px; text-align: center; }
.thanks h1 { font-size: 36.200px; line-height: 44px; font-weight: 300; padding-top: 26px; color: #111; }
.thanks h2 { font-size: 25.400px; line-height: 30px; font-weight: 300; margin-top: 18px; color: #111; }
.thanks p { font-size: 18px; line-height: 22px; font-weight: 300; margin-top: 13px; color: #111; }
.thanks p b { font-weight: 700; }
.alert { height: 63px; margin-top: 12px; background: #c65b3f; color: #fff; display: flex; align-items: center; padding-left: 31px; font-size: 13.750px; text-align: left; }
.alert b { font-size: 12px; }
.alert-i { width: 20px; height: 20px; margin-right: 17px; flex: none; margin-top: -4px; }
.alert span { margin-top: -4px; }
.store-cols { display: flex; justify-content: space-between; margin-top: 30px; }
.shipping { width: 750px; height: 300px; }
.summary { width: 359px; height: 300px; }
.card-h { height: 48px; border-bottom: 1px solid #cfcfcf; padding-left: 19px; line-height: 47px; font-size: 18px; font-weight: 500; color: #222; }
.ship-body { display: flex; gap: 30px; padding: 12px 27px; }
.ship-col { width: 332px; font-size: 14px; }
.ship-col h4 { font-size: 18.300px; font-weight: 300; line-height: 26px; height: 27px; border-bottom: 1px solid #c9c9c9; color: #222; }
.ship-col p { line-height: 19px; font-weight: 300; }
.ship-col h4 + p { margin-top: 12px; }
.ship-col b { font-weight: 700; font-size: 13.500px; }
.sum-body { padding: 12px 19px; font-size: 14.200px; font-weight: 300; }
.sum-row { display: flex; justify-content: space-between; line-height: 20.800px; }
```
